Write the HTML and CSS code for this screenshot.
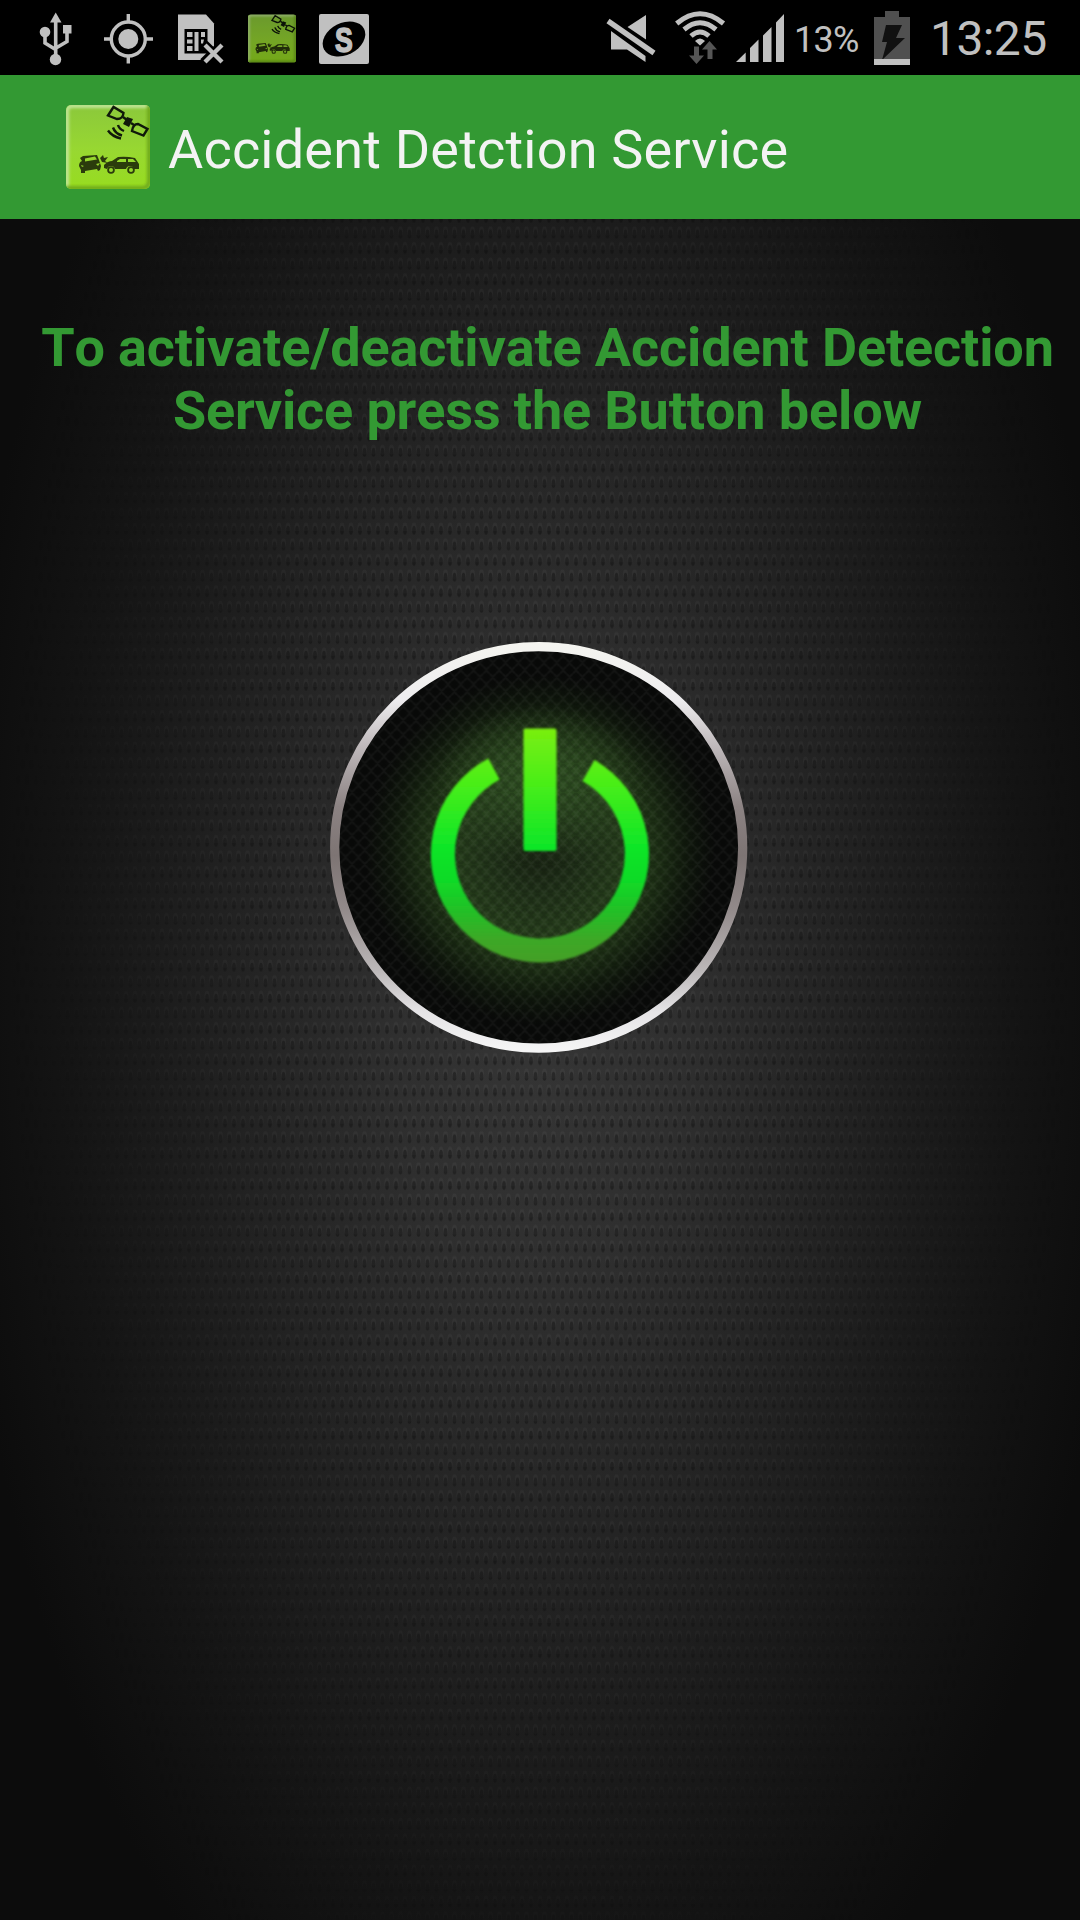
FILE: index.html
```html
<!DOCTYPE html>
<html lang="en">
<head>
<meta charset="utf-8">
<title>Accident Detction Service</title>
<link rel="stylesheet" href="styles.css">
</head>
<body>
<svg class="defs" aria-hidden="true">
  <defs>
    <linearGradient id="tile" x1="0" y1="0" x2="0" y2="1"><stop offset="0" stop-color="#8bc83b"/><stop offset=".55" stop-color="#98d831"/><stop offset="1" stop-color="#97dc20"/></linearGradient>
    <filter id="soft" x="-10%" y="-10%" width="120%" height="120%"><feGaussianBlur stdDeviation="1.600"/></filter>
    <clipPath id="tileClip"><rect width="84" height="84" rx="5"/></clipPath>
    <symbol id="app" viewBox="0 0 84 84">
      <g clip-path="url(#tileClip)">
        <rect width="84" height="84" fill="url(#tile)"/>
        <path d="M1 84V6q0-5 5-5H84" fill="none" stroke="#c2e69a" stroke-width="4" filter="url(#soft)"/>
        <path d="M83 0V76q0 7-7 7H0" fill="none" stroke="#6fa91c" stroke-width="4" filter="url(#soft)"/>
      </g>
      <g fill="none" stroke="#10190a" stroke-width="2.400">
        <path d="M47.500 2 42 10.500 51 14q6 0 6.500-6z"/>
        <path d="M66 26q1-7 6-7l9.500 5-4 6.500z"/>
        <path d="M57 12l4 3M65 18l3 2"/>
        <path d="M52 20q1 4 6 6M47 22.500q2 6 9 8M42 25.500q4 6 13 8"/>
      </g>
      <path d="M61 12l6 2-4 8-6-3z" fill="#10190a"/>
      <g fill="#2b3b0c">
        <path d="M13 61q0-4 3-5l-2-3 3-2 14-1 2 5 2 6-1 4-2 1-1-2-12 2v2h-4v-3z"/>
        <path d="M38 60q4-4 8-4l6-4q8-1 17 1l4 6v5h-5q-1-3-4-3t-4 3H49q-1-3-4-3t-4 3l-3-1z"/>
        <circle cx="45" cy="65" r="3.800"/><circle cx="65" cy="65" r="3.800"/>
        <path d="M34 53l3-3 1 3 4-1-3 4 3 2-6-1z"/>
      </g>
      <g fill="#96d72e">
        <path d="M19 53.500l10-2 2 3-12 2zM51 56l3-2h6v3h-9zM62 54h5l3 3h-8z"/>
        <circle cx="45" cy="65" r="2"/><circle cx="65" cy="65" r="2"/>
        <path d="M15 60l3 1-2 1zM30 59l4-1-2 3z"/>
      </g>
    </symbol>
  </defs>
</svg>

<header class="status">
  <svg class="status-icons" width="319" height="75" viewBox="0 0 319 75" fill="#c0c0c0">
    <g fill="none" stroke="#c0c0c0" stroke-width="3.600">
      <path d="M55.700 20V56M45 34v9l10.500 6.500M67 32v9.500L56 48"/>
    </g>
    <path d="M55.700 12.500 61.500 22.500H50z"/>
    <circle cx="45" cy="32" r="5.300"/><circle cx="55.500" cy="59.500" r="5.700"/>
    <rect x="63" y="25" width="8.500" height="8.500"/>
    <circle cx="128.300" cy="39" r="10"/>
    <g fill="none" stroke="#c0c0c0" stroke-width="3.400"><circle cx="128.300" cy="39" r="17"/><path d="M128.300 14v8M128.300 56v7.500M104 39h8M145 39h8"/></g>
    <path d="M178 14.500h28l8 9v27l-14 9.500h-22z"/>
    <rect x="184.500" y="29" width="23" height="24.500" fill="#000"/>
    <g><path d="M187 32h5.500v5H187zM187 39.500h5.500v4H187zM187 46h5.500v5H187zM194.500 32h4v19h-4zM201 32h4v5h-4zM201 39.500h3l-1 4h-2z"/></g>
    <path d="M204 44.500 222.500 62.500M222.500 44.500 204 62.500" stroke="#000" stroke-width="10"/>
    <path d="M205 45 222 62M222 45 205 62" stroke="#c0c0c0" stroke-width="4.300"/>
    <use href="#app" x="248" y="14.500" width="48" height="48"/>
    <rect x="248" y="14.500" width="48" height="48" rx="3" fill="#000" opacity=".23"/>
  </svg>
  <svg class="logo-s" width="50" height="50" viewBox="0 0 50 50">
    <rect width="50" height="50" rx="2" fill="#c0c0c0"/>
    <ellipse cx="25" cy="25" rx="22.500" ry="16" transform="rotate(-27 25 25)"/>
    <text class="logo-letter" transform="translate(25 37.500) scale(.74 1)" text-anchor="middle">S</text>
  </svg>
  <svg class="signals" width="180" height="75" viewBox="605 0 180 75" fill="#c0c0c0">
    <path d="M646 15V39.500L627.500 27zM611 31 645.500 56V62L627 49.500H611z"/>
    <path d="M608 21 654 53" stroke="#c0c0c0" stroke-width="5.300"/>
    <g fill="none" stroke="#c0c0c0" stroke-width="5"><path d="M676.700 23.500Q700 4 723.500 23.500M684 29.500Q700 16 716 29.500M691 36Q700 28 709 36"/></g>
    <path d="M695 41q5-5 10 0l-5 4.500z"/>
    <path d="M694 46.500h5v9h5L696.500 64 689 55.500h5zM709.500 41 717 49.500h-4.500V59h-5V49.500H702z" fill="#555"/>
    <path d="M736 62 745.700 52.500V62zM750 62V48l8.500-8.500V62zM763 62V35.500l8.500-8.500V62zM776 62V22.500l8-8.500V62z"/>
  </svg>
  <span class="percent">13%</span>
  <svg class="battery" width="36" height="54" viewBox="0 0 36 54">
    <path d="M11 0h14v6h11v48H0V6h11z" fill="#505050"/>
    <path d="M12 14h16l-6 13h9L8 49l5-18H8z" fill="#111"/>
    <path d="M0 48h36v6H0z" fill="#c0c0c0"/>
  </svg>
  <time class="clock">13:25</time>
</header>

<div class="action-bar">
  <svg width="84" height="84"><use href="#app" width="84" height="84"/></svg>
  <h1 class="title">Accident Detction Service</h1>
</div>

<main class="screen">
  <svg class="backdrop" width="1080" height="1701" aria-hidden="true">
    <defs>
      <pattern id="mesh" width="9" height="31.200" patternUnits="userSpaceOnUse">
        <g fill="#fff" fill-opacity=".045"><ellipse cx="0" cy="28" rx="2.500" ry="5"/><ellipse cx="9" cy="28" rx="2.500" ry="5"/><ellipse cx="4.500" cy="12.400" rx="2.500" ry="5"/></g>
        <g fill="#000" fill-opacity=".34"><ellipse cx="0" cy="30.400" rx="1.900" ry="4.400"/><ellipse cx="9" cy="30.400" rx="1.900" ry="4.400"/><ellipse cx="0" cy="-.8" rx="1.900" ry="4.400"/><ellipse cx="9" cy="-.8" rx="1.900" ry="4.400"/><ellipse cx="4.500" cy="14.800" rx="1.900" ry="4.400"/></g>
      </pattern>
      <radialGradient id="meshFade" gradientUnits="userSpaceOnUse" cx="0" cy="0" r="1" gradientTransform="translate(540 700) scale(530 1250)"><stop offset="0" stop-color="#fff"/><stop offset=".5" stop-color="#ccc"/><stop offset="1" stop-color="#000"/></radialGradient>
      <mask id="meshMask"><rect width="1080" height="1701" fill="url(#meshFade)"/></mask>
    </defs>
    <rect width="1080" height="1701" fill="url(#mesh)" mask="url(#meshMask)"/>
  </svg>
  <p class="hint">To activate/deactivate Accident Detection<br>Service press the Button below</p>
  <button class="power" type="button" aria-label="Toggle service">
    <svg width="420" height="414" viewBox="330 640 420 414">
      <defs>
        <linearGradient id="rim" gradientUnits="userSpaceOnUse" x1="0" y1="642" x2="0" y2="1053"><stop offset="0" stop-color="#f5f5f0"/><stop offset=".14" stop-color="#eeedef"/><stop offset=".25" stop-color="#c0babc"/><stop offset=".4" stop-color="#8c8383"/><stop offset=".52" stop-color="#7d7473"/><stop offset=".65" stop-color="#928a8a"/><stop offset=".8" stop-color="#bcb8b9"/><stop offset=".9" stop-color="#e5e4e6"/><stop offset="1" stop-color="#f6f6f6"/></linearGradient>
        <linearGradient id="lamp" gradientUnits="userSpaceOnUse" x1="0" y1="728" x2="0" y2="963"><stop offset="0" stop-color="#7aef10"/><stop offset=".22" stop-color="#4dee18"/><stop offset=".5" stop-color="#10e628"/><stop offset=".65" stop-color="#10da28"/><stop offset=".78" stop-color="#23bf28"/><stop offset=".9" stop-color="#3da826"/><stop offset="1" stop-color="#459f25"/></linearGradient>
        <radialGradient id="glow" gradientUnits="userSpaceOnUse" cx="540" cy="850" r="175"><stop offset="0" stop-color="#172011"/><stop offset=".25" stop-color="#1f3018"/><stop offset=".52" stop-color="#263e1b"/><stop offset=".68" stop-color="#1c2e14"/><stop offset=".85" stop-color="#0f170c"/><stop offset="1" stop-color="#090a09"/></radialGradient>
        <radialGradient id="core"><stop offset="0" stop-color="#2f5022"/><stop offset="1" stop-color="#2f5022" stop-opacity="0"/></radialGradient>
        <pattern id="weave" width="12.800" height="14.400" patternUnits="userSpaceOnUse">
          <path d="M0 7.200 6.400 1 12.800 7.200M-6.400 14.400 0 8.200 6.400 14.400 12.800 8.200 19.200 14.400" fill="none" stroke="#fff" stroke-opacity=".04" stroke-width="2"/>
          <path d="M0 1 6.400 7.200 12.800 1M-6.400 8.200 0 14.400 6.400 8.200 12.800 14.400" fill="none" stroke="#000" stroke-opacity=".13" stroke-width="2.400"/>
        </pattern>
        <filter id="edge"><feGaussianBlur stdDeviation=".8"/></filter>
      </defs>
      <ellipse cx="538.700" cy="847.400" rx="204" ry="200.700" fill="url(#glow)"/>
      <ellipse cx="540" cy="785" rx="105" ry="80" fill="url(#core)"/>
      <ellipse cx="538.700" cy="847.400" rx="204" ry="200.700" fill="url(#weave)"/>
      <ellipse cx="538.700" cy="847.400" rx="204" ry="200.700" fill="none" stroke="url(#rim)" stroke-width="9.200"/>
      <g filter="url(#edge)">
        <path d="M494 769A97 96.500 0 1 0 588.500 770.500" fill="none" stroke="url(#lamp)" stroke-width="24"/>
        <rect x="523.500" y="728.500" width="33" height="122.500" rx="2" fill="url(#lamp)"/>
      </g>
    </svg>
  </button>
</main>
</body>
</html>
```
FILE: styles.css
```css
* {
  box-sizing: border-box;
}

body {
  margin: 0;
  width: 1080px;
  height: 1920px;
  display: flex;
  flex-direction: column;
  overflow: hidden;
  background: #000;
  font-family: Roboto, "Liberation Sans", sans-serif;
}

.defs {
  position: absolute;
  width: 0;
  height: 0;
}

.status {
  height: 75px;
  flex: none;
  display: flex;
  align-items: center;
  background: #000;
  color: #c0c0c0;
}

.status > * {
  flex: none;
}

.logo-s {
  margin-top: 3px;
}

.logo-letter {
  font: bold 36px "Liberation Sans", sans-serif;
  fill: #c0c0c0;
  stroke: #c0c0c0;
  stroke-width: 1.6px;
}

.signals {
  margin-left: 236px;
}

.percent {
  width: 72px;
  margin-left: 9px;
  padding-top: 4px;
  font-size: 36px;
  line-height: 42px;
  letter-spacing: -0.7px;
}

.battery {
  margin-left: 8px;
}

.clock {
  margin-left: 20px;
  padding-top: 2px;
  font-size: 48px;
  line-height: 56px;
  letter-spacing: -0.6px;
}

.action-bar {
  height: 144px;
  flex: none;
  display: flex;
  align-items: center;
  gap: 18px;
  padding-left: 66px;
  background: #339933;
}

.title {
  margin: 0;
  padding-top: 5px;
  color: #f3f3f3;
  font-size: 54px;
  font-weight: 400;
  line-height: 64px;
  letter-spacing: 0.2px;
  white-space: nowrap;
}

.screen {
  position: relative;
  flex: 1;
  display: flex;
  flex-direction: column;
  align-items: center;
  padding-top: 97px;
  background: radial-gradient(ellipse 590px 1200px at 540px 760px, #363636 0%, #2f2f2f 25%, #222222 52%, #141414 80%, #0c0c0c 100%);
}

.backdrop {
  position: absolute;
  inset: 0;
}

.hint {
  position: relative;
  margin: 0 0 0 15px;
  color: #339933;
  font-size: 54px;
  font-weight: 700;
  line-height: 63px;
  font-kerning: none;
  letter-spacing: -0.14px;
  text-align: center;
  white-space: nowrap;
}

.power {
  position: relative;
  margin-top: 198px;
  padding: 0;
  border: 0;
  background: none;
}

.power svg {
  display: block;
}
```
